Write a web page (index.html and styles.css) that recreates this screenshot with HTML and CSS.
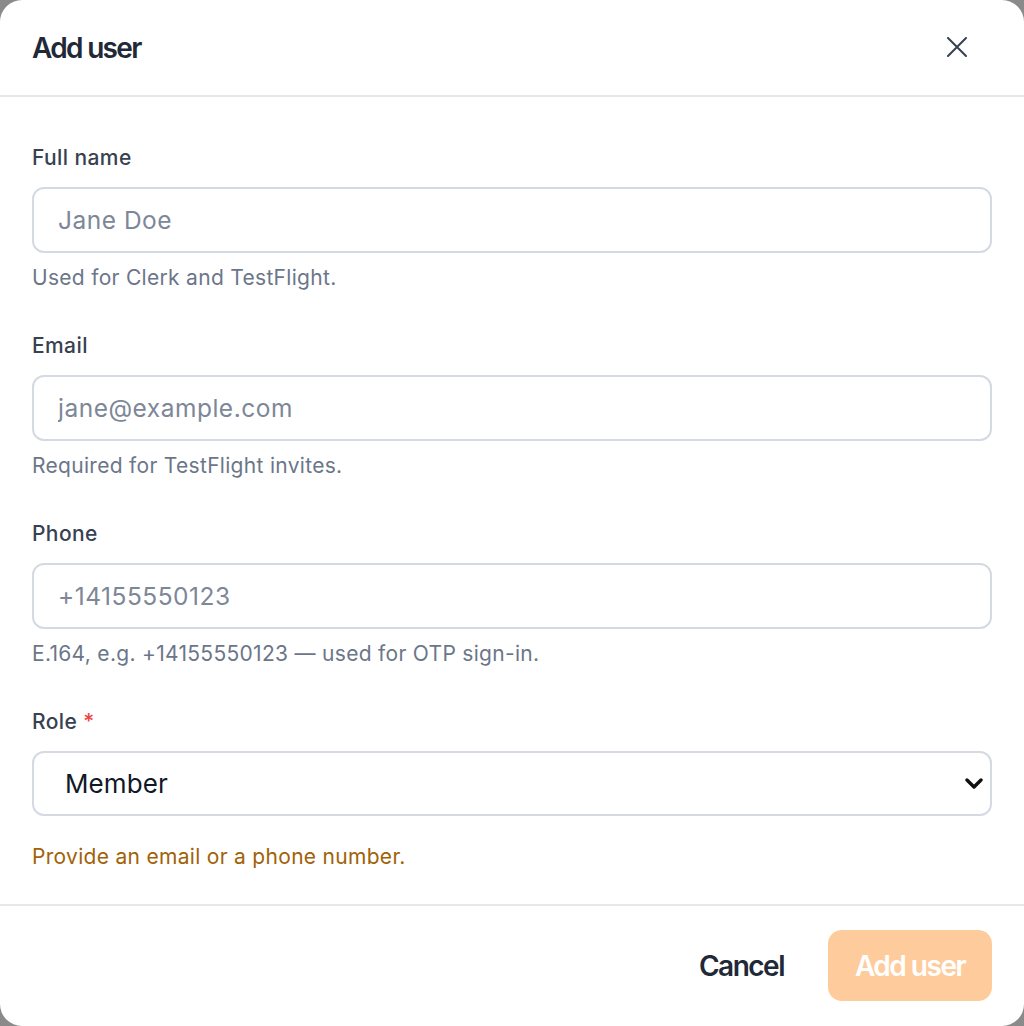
FILE: index.html
```html
<!DOCTYPE html>
<html lang="en">
<head>
<meta charset="utf-8">
<title>Add user</title>
<link rel="stylesheet" href="styles.css">
</head>
<body>
<div class="modal">
  <header class="modal-header">
    <h2 class="modal-title">Add user</h2>
    <button class="close-btn" aria-label="Close">
      <svg width="20" height="20" viewBox="0 0 20 20" fill="none" stroke="#374151" stroke-width="2" stroke-linecap="round"><path d="M1 1L19 19M19 1L1 19"/></svg>
    </button>
  </header>
  <form class="modal-body">
    <div class="field">
      <label class="label">Full name</label>
      <input class="input" type="text" placeholder="Jane Doe">
      <p class="help">Used for Clerk and TestFlight.</p>
    </div>
    <div class="field">
      <label class="label">Email</label>
      <input class="input" type="email" placeholder="jane@example.com">
      <p class="help">Required for TestFlight invites.</p>
    </div>
    <div class="field">
      <label class="label">Phone</label>
      <input class="input" type="tel" placeholder="+14155550123">
      <p class="help">E.164, e.g. +14155550123 — used for OTP sign-in.</p>
    </div>
    <div class="field field-last">
      <label class="label">Role <span class="req">*</span></label>
      <div class="select-wrap">
        <select class="select">
          <option>Member</option>
          <option>Admin</option>
        </select>
        <svg class="chevron" width="18" height="11" viewBox="0 0 18 11" fill="none" stroke="#111111" stroke-width="3.4" stroke-linecap="round" stroke-linejoin="round"><path d="M2 2L9 9L16 2"/></svg>
      </div>
    </div>
    <p class="warning">Provide an email or a phone number.</p>
  </form>
  <footer class="modal-footer">
    <button class="btn btn-ghost">Cancel</button>
    <button class="btn btn-primary" disabled>Add user</button>
  </footer>
</div>
</body>
</html>
```

FILE: styles.css
```css
* { box-sizing: border-box; }
html, body { margin: 0; padding: 0; }
body {
  background: #8a8a8a;
  font-family: Inter, "Noto Sans", sans-serif;
  width: 1024px;
  height: 1026px;
  overflow: hidden;
}
.modal {
  width: 1024px;
  height: 1026px;
  background: #ffffff;
  border-radius: 22px;
  display: flex;
  flex-direction: column;
  overflow: hidden;
}
.modal-header {
  height: 97px;
  border-bottom: 2px solid #e5e7eb;
  display: flex;
  align-items: center;
  justify-content: space-between;
  padding: 0 57px 0 32px;
  flex-shrink: 0;
}
.modal-title {
  margin: 0;
  font-size: 28px;
  font-weight: 600;
  letter-spacing: -1.7px;
  color: #1f2937;
  line-height: 36px;
}
.close-btn {
  border: 0;
  background: none;
  padding: 0;
  width: 20px;
  height: 20px;
  display: flex;
  align-items: center;
  justify-content: center;
  margin-top: -2px;
  cursor: pointer;
}
.modal-body {
  padding: 47px 32px 0;
  display: flex;
  flex-direction: column;
  flex: 1;
}
.field {
  display: flex;
  flex-direction: column;
  margin-bottom: 40px;
}
.field-last { margin-bottom: 27px; }
.label {
  font-size: 21px;
  line-height: 28px;
  font-weight: 500;
  letter-spacing: 0.4px;
  color: #374151;
  margin-bottom: 15px;
}
.req { color: #ef4444; }
.input, .select {
  width: 100%;
  height: 66px;
  border: 2px solid #d4d9e2;
  border-radius: 12px;
  background: #ffffff;
  font-family: Inter, "Noto Sans", sans-serif;
  font-size: 24.5px;
  letter-spacing: 0.5px;
  color: #111827;
  outline: none;
}
.input { padding: 0 24px; }
.input::placeholder { color: #7d8797; }
.help {
  margin: 11px 0 0;
  font-size: 21px;
  line-height: 28px;
  letter-spacing: 0.3px;
  color: #6b7689;
}
.select-wrap { position: relative; }
.select {
  appearance: none;
  -webkit-appearance: none;
  padding: 0 60px 0 31px;
  height: 65px;
  font-size: 26px;
  letter-spacing: 0.1px;
}
.chevron {
  position: absolute;
  right: 9px;
  top: 27px;
  pointer-events: none;
}
.warning {
  margin: 0;
  font-size: 21px;
  line-height: 28px;
  letter-spacing: 0.3px;
  color: #a16207;
}
.modal-footer {
  border-top: 2px solid #e5e7eb;
  height: 122px;
  flex-shrink: 0;
  display: flex;
  align-items: center;
  justify-content: flex-end;
  gap: 16px;
  padding: 0 32px 1px;
}
.btn {
  height: 71px;
  padding: 0 28px;
  border: 0;
  border-radius: 14px;
  font-family: Inter, "Noto Sans", sans-serif;
  font-size: 28px;
  font-weight: 600;
  letter-spacing: -1.5px;
  cursor: pointer;
}
.btn-ghost {
  background: transparent;
  color: #1f2937;
}
.btn-primary {
  background: #fecc9c;
  color: #ffffff;
  width: 164px;
  padding: 0;
}
```
